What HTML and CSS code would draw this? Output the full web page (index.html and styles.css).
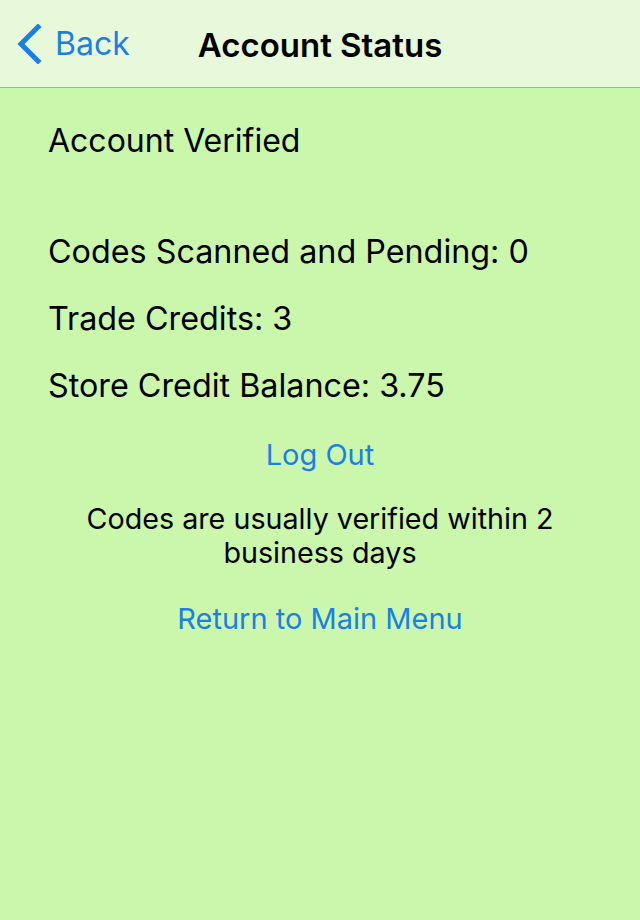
FILE: index.html
```html
<!DOCTYPE html>
<html>
<head>
  <title>Account Status</title>
  <link rel="stylesheet" href="styles.css">
</head>
<body>
  <div class="navbar">
    <a class="back" href="#">
      <svg class="chevron" width="26" height="40" viewBox="0 0 26 40">
        <path d="M22 3 L5 20 L22 37" fill="none" stroke="#1a7fe6" stroke-width="5" stroke-linecap="square"/>
      </svg>
      <span>Back</span>
    </a>
    <div class="title">Account Status</div>
  </div>

  <div class="content">
    <div class="verified">Account Verified</div>

    <div class="stats">
      <div class="stat">Codes Scanned and Pending: 0</div>
      <div class="stat">Trade Credits: 3</div>
      <div class="stat">Store Credit Balance: 3.75</div>
    </div>

    <a class="link" href="#">Log Out</a>
    <p class="note">Codes are usually verified within 2 business days</p>
    <a class="link" href="#">Return to Main Menu</a>
  </div>
</body>
</html>
```

FILE: styles.css
```css
body {
  font-family: Inter, Roboto, "Liberation Sans", sans-serif;
  margin: 0;
  padding: 0;
  background-color: #cbf7ad;
  min-height: 100vh;
  color: #000;
}
.navbar {
  height: 88px;
  box-sizing: border-box;
  background-color: #e8f8da;
  border-bottom: 1px solid #9fb98f;
  display: flex;
  align-items: center;
  position: relative;
}
.back {
  display: flex;
  align-items: center;
  gap: 13px;
  padding-left: 16px;
  color: #1a7fe6;
  text-decoration: none;
  font-size: 32px;
}
.title {
  position: absolute;
  left: 0;
  right: 0;
  top: 25px;
  text-align: center;
  font-size: 33px;
  line-height: 40px;
  font-weight: 600;
  pointer-events: none;
}
.content {
  padding: 0 48px;
  display: flex;
  flex-direction: column;
}
.verified {
  font-size: 32px;
  margin-top: 33px;
  line-height: 40px;
}
.stats {
  margin-top: 71px;
  display: flex;
  flex-direction: column;
  gap: 27px;
}
.stat {
  font-size: 32.3px;
  line-height: 40px;
}
.link {
  align-self: center;
  color: #1a7fe6;
  text-decoration: none;
  font-size: 29px;
  line-height: 34px;
}
.stats + .link {
  margin-top: 32px;
}
.note {
  text-align: center;
  font-size: 28.7px;
  line-height: 34px;
  margin: 30px 0 32px;
}
```
